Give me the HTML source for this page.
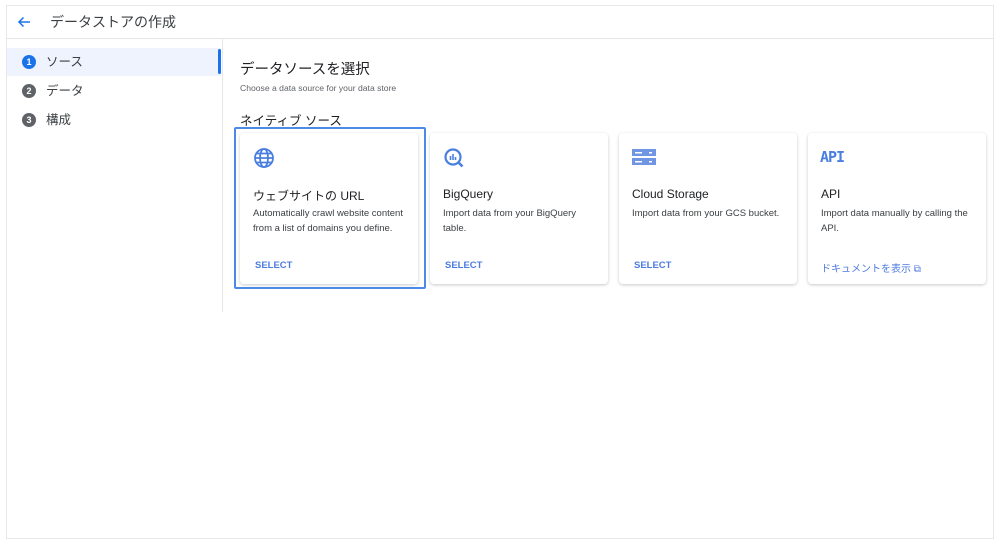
<!DOCTYPE html>
<html><head><meta charset="utf-8"><style>
*{box-sizing:border-box;margin:0;padding:0}
body{width:1000px;height:544px;background:#fff;font-family:"Liberation Sans","Noto Sans CJK JP",sans-serif;color:#3c4043;position:relative;overflow:hidden}
.frame{position:absolute;left:6px;top:5px;width:988px;height:534px;border:1px solid #e8e8e8}
.hdr{position:absolute;left:7px;top:6px;width:986px;height:33px;border-bottom:1px solid #e6e6e6}
.hdr .t{position:absolute;left:43px;top:6px;font-size:14px;color:#3c4043}
.side{position:absolute;left:222px;top:39px;width:1px;height:273px;background:#e6e6e6}
.item{position:absolute;left:7px;width:214px;height:28px;font-size:12.5px;line-height:28px;padding-left:39px}
.item .n{position:absolute;left:15px;top:7px;width:14px;height:14px;border-radius:50%;background:#5f6368;color:#fff;font-size:9px;font-weight:bold;line-height:14px;text-align:center}
.act{background:#eef3fd}
.act .n{background:#1a73e8}
.bar{position:absolute;left:218px;top:49px;width:3px;height:25px;background:#1a73e8;border-radius:2px}
.h2{position:absolute;left:240px;top:58px;font-size:14.5px;color:#202124}
.sub{position:absolute;left:240px;top:83px;font-size:8.6px;color:#5f6368}
.h3{position:absolute;left:240px;top:110px;font-size:12.5px;color:#202124}
.card{position:absolute;top:133px;width:178px;height:151px;background:#fff;border-radius:4px;box-shadow:0 1px 3px rgba(0,0,0,.22)}
.card .ti{position:absolute;left:13px;top:54px;font-size:12px;color:#202124}
.card .d{position:absolute;left:13px;top:73px;width:152px;font-size:9.5px;line-height:15px;color:#3c4043}
.card .s{position:absolute;left:15px;top:127px;font-size:9.5px;font-weight:bold;color:#4d7be0}
.card svg{position:absolute;left:13px;top:14px}
.sel{position:absolute;left:234px;top:127px;width:192px;height:162px;border:2px solid #4b8ae8;border-radius:2px}
</style></head><body>
<div class="frame"></div>
<div class="hdr"><svg style="position:absolute;left:9px;top:8px" width="16" height="16" viewBox="0 0 16 16"><path d="M14 8H3M7.5 3.5L3 8l4.5 4.5" stroke="#1a73e8" stroke-width="1.5" fill="none"/></svg><div class="t">データストアの作成</div></div>
<div class="side"></div>
<div class="item act" style="top:48px"><span class="n">1</span>ソース</div>
<div class="bar"></div>
<div class="item" style="top:77px"><span class="n">2</span>データ</div>
<div class="item" style="top:106px"><span class="n">3</span>構成</div>
<div class="h2">データソースを選択</div>
<div class="sub">Choose a data source for your data store</div>
<div class="h3">ネイティブ ソース</div>
<div class="card" style="left:240px"><svg width="22" height="22" viewBox="0 0 22 22" fill="none" stroke="#4a7fe0" stroke-width="1.8"><circle cx="11" cy="11" r="9"/><ellipse cx="11" cy="11" rx="4" ry="9"/><path d="M2 11h18M3.5 6.5h15M3.5 15.5h15"/></svg><div class="ti">ウェブサイトの URL</div><div class="d">Automatically crawl website content from a list of domains you define.</div><div class="s">SELECT</div></div>
<div class="sel"></div>
<div class="card" style="left:430px"><svg width="22" height="22" viewBox="0 0 22 22"><circle cx="10" cy="10" r="7.5" fill="none" stroke="#4a7fe0" stroke-width="2.2"/><path d="M15.5 15.5l4 4" stroke="#4a7fe0" stroke-width="2.6"/><path d="M7.5 9v4M10 7v6M12.5 10v3" stroke="#4a7fe0" stroke-width="1.6"/></svg><div class="ti">BigQuery</div><div class="d" style="width:140px">Import data from your BigQuery table.</div><div class="s">SELECT</div></div>
<div class="card" style="left:619px"><svg width="24" height="22" viewBox="0 0 24 22"><rect x="0" y="2" width="24" height="7" fill="#6f95e3"/><rect x="0" y="11" width="24" height="7" fill="#6f95e3"/><rect x="3" y="5" width="7" height="1.5" fill="#fff"/><rect x="17" y="5" width="3" height="1.5" fill="#fff"/><rect x="3" y="14" width="7" height="1.5" fill="#fff"/><rect x="17" y="14" width="3" height="1.5" fill="#fff"/></svg><div class="ti">Cloud Storage</div><div class="d">Import data from your GCS bucket.</div><div class="s">SELECT</div></div>
<div class="card" style="left:808px"><div style="position:absolute;left:12px;top:15px;font-family:'DejaVu Sans Mono',monospace;font-weight:bold;font-size:15px;color:#4a7fe0;letter-spacing:-1px">API</div><div class="ti">API</div><div class="d">Import data manually by calling the API.</div><div class="s" style="font-weight:normal;font-size:10px;left:13px">ドキュメントを表示 ⧉</div></div>
</body></html>
